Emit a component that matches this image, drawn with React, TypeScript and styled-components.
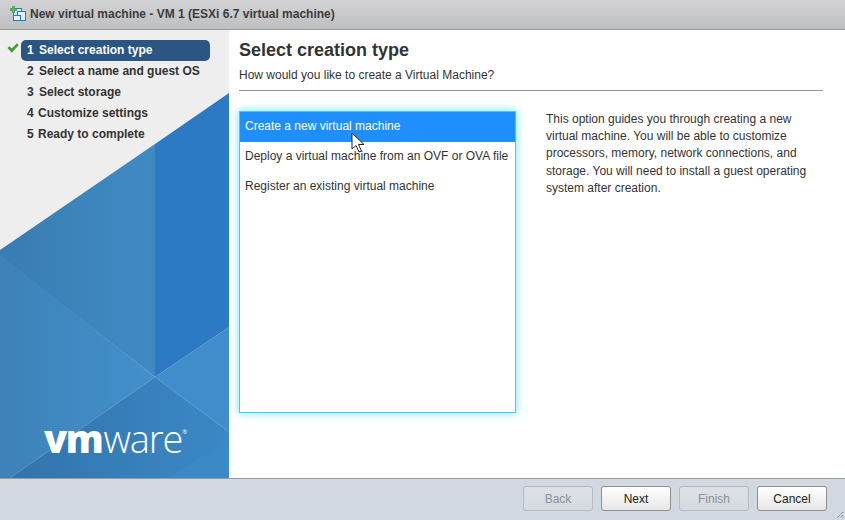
import React from "react";
import styled, { createGlobalStyle } from "styled-components";

const Global = createGlobalStyle`
  html, body { margin: 0; padding: 0; background: #fff; }
  body { font-family: "Liberation Sans", Arial, sans-serif; font-size: 12px; color: #333; }
  * { box-sizing: border-box; }
`;

const Dialog = styled.div`
  width: 845px; height: 520px; display: flex; flex-direction: column;
  overflow: hidden; position: relative; background: #fff;
`;
const TitleBar = styled.header`
  height: 30px; flex: none; display: flex; align-items: center; gap: 4px; padding: 0 0 2px 10px;
  background: linear-gradient(#d3d3d5, #bebfc2); border-bottom: 1px solid #98999b;
`;
const TitleText = styled.div`
  font-size: 12px; font-weight: bold; color: #3c3c3c;
`;
const Body = styled.div`
  flex: 1; min-height: 0; display: flex;
`;
const Sidebar = styled.nav`
  width: 229px; flex: none; position: relative; background: #eeeeee; padding: 10px 19px 0 21px;
  overflow: hidden;
`;
const Art = styled.svg`
  position: absolute; inset: 0; width: 229px; height: 448px;
`;
const Step = styled.div<{ $active?: boolean }>`
  position: relative; height: 21px; display: flex; align-items: center; padding: 0 0 2px 6px;
  font-size: 12px; font-weight: bold; border-radius: 5px;
  color: ${(p) => (p.$active ? "#fff" : "#333")};
  background: ${(p) => (p.$active ? "#2b5683" : "transparent")};
`;
const StepNum = styled.span<{ $wide?: boolean }>`
  width: ${(p) => (p.$wide ? "12px" : "11px")}; flex: none;
`;
const Check = styled.svg`
  position: absolute; left: -14px; top: 3px; width: 12px; height: 10px;
`;
const Logo = styled.div`
  position: absolute; left: 44px; top: 387px; display: flex; align-items: baseline;
  color: #fff; font-family: "Open Sans", sans-serif; font-size: 38px; line-height: 42px;
  letter-spacing: -1.1px;
`;
const LogoVm = styled.span`
  font-weight: 800; letter-spacing: -1.4px;
`;
const LogoWare = styled.span`
  font-weight: 300; margin-left: 1px;
`;
const LogoMark = styled.span`
  font-size: 6px; line-height: 6px; align-self: flex-start; margin: 12px 0 0 0; letter-spacing: 0;
`;
const Main = styled.main`
  flex: 1; min-width: 0; padding: 10px 22px 0 10px; display: flex; flex-direction: column;
`;
const Heading = styled.h1`
  margin: 0; font-size: 18px; line-height: 21px; font-weight: bold; color: #333;
`;
const Subtitle = styled.div`
  margin-top: 7px; font-size: 12px; line-height: 14px; color: #333;
  padding-bottom: 8px; border-bottom: 1px solid #999;
`;
const Columns = styled.div`
  display: flex; gap: 30px; margin-top: 20px;
`;
const List = styled.div`
  width: 277px; height: 302px; flex: none; background: #fff; border: 1px solid #38cdfb;
  box-shadow: 0 0 8px 1px #8fe3ff;
`;
const Option = styled.div<{ $selected?: boolean }>`
  height: 30px; padding: 0 5px 2px; display: flex; align-items: center; font-size: 12px; white-space: nowrap;
  color: ${(p) => (p.$selected ? "#fff" : "#333")};
  background: ${(p) => (p.$selected ? "#1f8fff" : "transparent")};
`;
const Help = styled.p`
  margin: 0; width: 270px; font-size: 12px; line-height: 17.2px; color: #333;
`;
const Footer = styled.footer`
  height: 42px; flex: none; display: flex; justify-content: flex-end; align-items: flex-start;
  gap: 8px; padding: 7px 18px 0 0; background: #d2d8df; border-top: 1px solid #98999b;
`;
const Button = styled.button<{ $disabled?: boolean }>`
  width: 70px; height: 25px; padding: 0; border-radius: 3px; font-family: inherit; font-size: 12px;
  color: ${(p) => (p.$disabled ? "#8a9097" : "#222")};
  border: 1px solid ${(p) => (p.$disabled ? "#b5bbc1" : "#8f8f8f")};
  background: ${(p) => (p.$disabled ? "linear-gradient(#dde1e6, #d5dae0)" : "linear-gradient(#fefefe, #e6e6e6)")};
`;
const Grip = styled.svg`
  position: absolute; right: 1px; bottom: 1px; width: 9px; height: 9px;
`;
const Cursor = styled.svg`
  position: absolute; left: 351px; top: 132px; width: 14px; height: 21px;
`;

const steps = ["Select creation type", "Select a name and guest OS", "Select storage", "Customize settings", "Ready to complete"];

export default function App() {
  return (
    <Dialog>
      <Global />
      <TitleBar>
        <svg width="16" height="16" viewBox="0 0 16 16">
          <rect x="3.5" y="2.500" width="8" height="9" fill="#cfe6f7" stroke="#1c7fc4" />
          <rect x="7.500" y="5.500" width="8" height="9" fill="#e4f1fb" stroke="#1c7fc4" />
          <rect x="3.500" y="9.500" width="7" height="5" fill="#e4f1fb" stroke="#1c7fc4" />
          <path d="M2.500 0.500h2v2h2v2h-2v2h-2v-2h-2v-2h2z" fill="#4cc257" stroke="#2b8f3c" strokeWidth="0.6" />
        </svg>
        <TitleText>New virtual machine - VM 1 (ESXi 6.7 virtual machine)</TitleText>
      </TitleBar>
      <Body>
        <Sidebar>
          <Art viewBox="0 0 229 448">
            <defs>
              <linearGradient id="mid" x1="0" x2="1" y1="0" y2="0">
                <stop offset="0" stopColor="#387db1" />
                <stop offset="1" stopColor="#408ac4" />
              </linearGradient>
              <linearGradient id="low" x1="0" x2="1" y1="0" y2="0">
                <stop offset="0" stopColor="#3c82b8" />
                <stop offset="1" stopColor="#4490cc" />
              </linearGradient>
              <linearGradient id="base" x1="0" x2="1" y1="0" y2="0">
                <stop offset="0" stopColor="#3274ab" />
                <stop offset="1" stopColor="#3b88c6" />
              </linearGradient>
            </defs>
            <polygon points="0,220 155,114 155,347 0,226" fill="url(#mid)" />
            <polygon points="155,114 229,63 229,297 155,347" fill="#2c7ac4" />
            <polygon points="0,225 155,347 10,448 0,448" fill="url(#low)" />
            <polygon points="155,347 229,297 229,402" fill="#418dcb" />
            <polygon points="155,347 229,402 229,448 10,448" fill="url(#base)" />
            <polygon points="167,448 229,410 229,448" fill="#3a88c6" />
          </Art>
          {steps.map((s, i) => (
            <Step key={s} $active={i === 0}>
              {i === 0 && (
                <Check viewBox="0 0 12 10">
                  <path d="M0.500 5l2-1.800 2.300 2.300L10 0.300l1.700 1.700L4.800 9.700z" fill="#3da02e" />
                </Check>
              )}
              <StepNum $wide={i < 3}>{i + 1}</StepNum>
              {s}
            </Step>
          ))}
          <Logo>
            <LogoVm>vm</LogoVm>
            <LogoWare>ware</LogoWare>
            <LogoMark>®</LogoMark>
          </Logo>
        </Sidebar>
        <Main>
          <Heading>Select creation type</Heading>
          <Subtitle>How would you like to create a Virtual Machine?</Subtitle>
          <Columns>
            <List>
              <Option $selected>Create a new virtual machine</Option>
              <Option>Deploy a virtual machine from an OVF or OVA file</Option>
              <Option>Register an existing virtual machine</Option>
            </List>
            <Help>
              This option guides you through creating a new virtual machine. You will be able to customize processors, memory, network connections, and storage. You will need to install a guest operating system after creation.
            </Help>
          </Columns>
        </Main>
      </Body>
      <Footer>
        <Button $disabled>Back</Button>
        <Button>Next</Button>
        <Button $disabled>Finish</Button>
        <Button>Cancel</Button>
      </Footer>
      <Cursor viewBox="0 0 14 21">
        <path d="M1 1v16l4-3.500 3 6.500 2.500-1-3-6.500h5.500z" fill="#fff" stroke="#222" strokeWidth="1" />
      </Cursor>
      <Grip viewBox="0 0 9 9">
        <path d="M8 2L2 8M8 5L5 8M8 7.500L7.500 8" stroke="#666" strokeWidth="1" strokeDasharray="1 1" />
      </Grip>
    </Dialog>
  );
}
